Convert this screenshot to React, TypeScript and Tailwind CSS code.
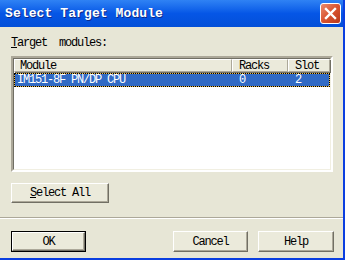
import React from 'react'

const mono = { fontFamily: '"Liberation Mono", "DejaVu Sans Mono", monospace' }

function Button({ children, isDefault = false, className = '' }: { children: React.ReactNode; isDefault?: boolean; className?: string }) {
  const face = (
    <div className="flex h-full w-full items-center justify-center border border-t-white border-l-white border-r-[#716f64] border-b-[#716f64] bg-[#ebeadb] shadow-[inset_-1px_-1px_0_#aca899] text-[12px] tracking-[-1.2px] text-black">
      {children}
    </div>
  )
  if (isDefault) {
    return <div className={`border border-black ${className}`}>{face}</div>
  }
  return <div className={className}>{face}</div>
}

function HeaderCell({ label, className }: { label: string; className: string }) {
  return (
    <div className={`flex h-full items-center border border-t-white border-l-white border-r-[#aca899] border-b-[#aca899] shadow-[1px_1px_0_#716f64] ${className}`}>
      {label}
    </div>
  )
}

export default function App() {
  return (
    <div className="h-[265px] w-[364px] bg-white" style={mono}>
      <div className="flex h-[260px] w-[345px] flex-col border-r-2 border-b-2 border-[#0a3ee0] bg-[#e7e6d6]">
        {/* title bar */}
        <div className="flex h-[27px] shrink-0 items-center justify-between bg-gradient-to-b from-[#2f82f4] via-[#0556e6] to-[#034fd8] pl-[5px] pr-[2px]">
          <span className="text-[13px] font-bold tracking-[0.1px] text-white [text-shadow:1px_1px_0_#0b2a8a]">
            Select Target Module
          </span>
          <div className="flex h-[21px] w-[21px] items-center justify-center rounded-[3px] border border-white bg-gradient-to-br from-[#e98a6c] via-[#d9532f] to-[#b8391c]">
            <svg width="13" height="13" viewBox="0 0 13 13">
              <path d="M2 2 L11 11 M11 2 L2 11" stroke="white" strokeWidth="2.4" strokeLinecap="square" />
            </svg>
          </div>
        </div>

        {/* body */}
        <div className="flex flex-1 flex-col">
          <div className="mt-[10px] pl-[11px] text-[12px] leading-[13px] tracking-[-1.2px] text-black whitespace-pre">
            <span className="underline">T</span>arget  modules:
          </div>

          <div className="mt-[6px] ml-[11px] flex h-[116px] w-[322px] flex-col border-2 border-t-[#aca899] border-l-[#aca899] border-r-white border-b-white">
            <div className="flex h-full flex-col border border-t-[#716f64] border-l-[#716f64] border-r-[#f1efe2] border-b-[#f1efe2] bg-white">
              <div className="flex h-[13px] shrink-0 bg-[#ebeadb] text-[12px] tracking-[-1.2px] text-black">
                <HeaderCell label="Module" className="w-[218px] pl-[5px]" />
                <HeaderCell label="Racks" className="w-[56px] pl-[6px]" />
                <HeaderCell label="Slot" className="w-[42px] pl-[6px]" />
              </div>
              <div className="mt-[1px] h-[14px] border border-dotted border-black bg-[#e8b84a]">
                <div className="flex h-full bg-[#316ac5] text-[12px] leading-[12px] tracking-[-1.2px] text-white">
                  <div className="w-[217px] pl-[2px]">IM151-8F PN/DP CPU</div>
                  <div className="w-[56px] pl-[7px]">0</div>
                  <div className="pl-[7px]">2</div>
                </div>
              </div>
            </div>
          </div>

          <Button className="mt-[11px] ml-[11px] h-[20px] w-[98px]">
            <span>
              <span className="underline">S</span>elect All
            </span>
          </Button>

          <div className="mt-[14px] h-[2px] w-full border-t border-t-[#aca899] border-b border-b-white" />

          <div className="mt-[12px] flex h-[21px] items-stretch pl-[11px] pr-[9px]">
            <Button isDefault className="w-[75px]">OK</Button>
            <div className="flex-1" />
            <Button className="w-[75px]">Cancel</Button>
            <Button className="ml-[10px] w-[76px]">Help</Button>
          </div>
        </div>
      </div>
    </div>
  )
}
